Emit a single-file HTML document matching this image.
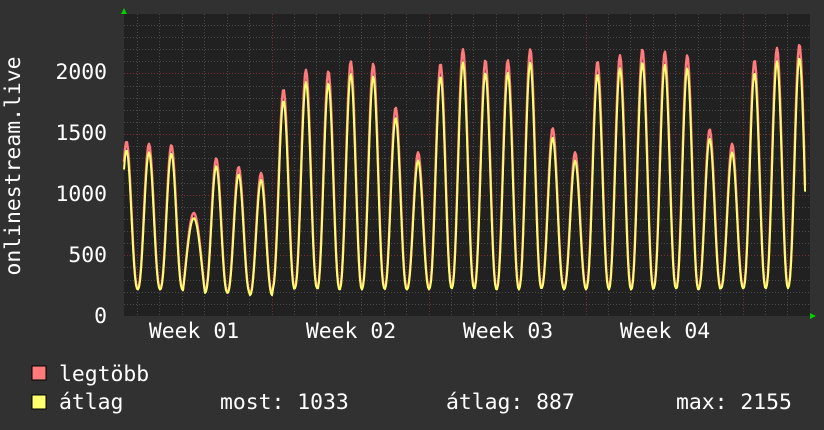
<!DOCTYPE html>
<html><head><meta charset="utf-8"><style>
html,body{margin:0;padding:0;background:#313131;}
body{width:824px;height:430px;overflow:hidden;position:relative;font-family:"DejaVu Sans Mono","Liberation Mono",monospace;color:#fff;}
svg{position:absolute;left:0;top:0;}
svg text{font-family:"DejaVu Sans Mono","Liberation Mono",monospace;fill:#fff;font-size:21.4px;}
</style></head><body>
<svg id="s" width="824" height="430" xmlns="http://www.w3.org/2000/svg">
<rect x="0" y="0" width="824" height="430" fill="#313131"/>
<rect x="124" y="14" width="686" height="302" fill="#212121"/>
<g id="grid"></g>
<polyline id="pmax" fill="none" stroke="#ff7a7a" stroke-width="2.4" stroke-linejoin="round"/>
<polyline id="pavg" fill="none" stroke="#ffff70" stroke-width="2" stroke-linejoin="round"/>
<polygon points="121,14 127,14 124,8" fill="#00d000"/>
<polygon points="810,313 810,319 816,316" fill="#00d000"/>
<text x="107" y="79" text-anchor="end">2000</text>
<text x="107" y="140" text-anchor="end">1500</text>
<text x="107" y="201" text-anchor="end">1000</text>
<text x="107" y="262" text-anchor="end">500</text>
<text x="107" y="323" text-anchor="end">0</text>
<text transform="translate(20,166) rotate(-90)" text-anchor="middle">onlinestream.live</text>
<text x="194" y="338" text-anchor="middle">Week 01</text>
<text x="351" y="338" text-anchor="middle">Week 02</text>
<text x="508" y="338" text-anchor="middle">Week 03</text>
<text x="665" y="338" text-anchor="middle">Week 04</text>
<rect x="32" y="366" width="14" height="14" fill="#ff7a7a" stroke="#000" stroke-width="1"/>
<rect x="32" y="395" width="14" height="14" fill="#ffff70" stroke="#000" stroke-width="1"/>
<text x="59" y="381">legtöbb</text>
<text x="59" y="409">átlag</text>
<text x="220" y="409">most: 1033</text>
<text x="446" y="409">átlag: 887</text>
<text x="676" y="409">max: 2155</text>
</svg>
<script>
var NS="http://www.w3.org/2000/svg",g=document.getElementById("grid");
function ln(x1,y1,x2,y2,c,d){var l=document.createElementNS(NS,"line");l.setAttribute("x1",x1);l.setAttribute("y1",y1);l.setAttribute("x2",x2);l.setAttribute("y2",y2);l.setAttribute("stroke",c);l.setAttribute("stroke-width",1);if(d)l.setAttribute("stroke-dasharray",d);g.appendChild(l);}
function Y(v){return 316-v*0.1213;}
for(var v=100;v<=2400;v+=100){var y=Math.round(Y(v))+0.5;ln(124,y,810,y,v%500==0?"#7a3030":"#4a4a4a","1,2");}
for(var k=0;k<32;k++){var x=Math.round(137+22.43*k)+0.5;if(x>810)break;var red=((k-6)%7==0);ln(x,14,x,316,red?"#7a3030":"#4a4a4a","1,2");}
var peaks=[1440,1420,1410,850,1300,1230,1180,1870,2030,2020,2100,2080,1720,1350,2080,2200,2110,2110,2200,1550,1350,2100,2150,2200,2180,2150,1540,1420,2110,2210,2240];
var tr=[230,230,230,200,200,200,180,230,240,230,230,240,230,230,240,240,230,230,240,240,230,240,230,230,240,230,230,240,240,240,250];
var a=[],b=[];
for(var x=124;x<=806;x++){var t=(x-126.5)/22.43;var k=Math.round(t);if(k<0)k=0;if(k>30)k=30;var f=t-Math.round(t);
var p=peaks[k],q=tr[k];var c=Math.pow((1+Math.cos(2*Math.PI*f))/2,1.2);
var v=q+(p-q)*c;if(k==3){v=q+(p-q)*Math.pow((1+Math.cos(2*Math.PI*f))/2,0.6);}
var av=v*0.95;if(x>=805){av=1033;v=1080;}
a.push(x+","+Y(v).toFixed(1));b.push(x+","+Y(av).toFixed(1));}
document.getElementById("pmax").setAttribute("points",a.join(" "));
document.getElementById("pavg").setAttribute("points",b.join(" "));
</script>
</body></html>
